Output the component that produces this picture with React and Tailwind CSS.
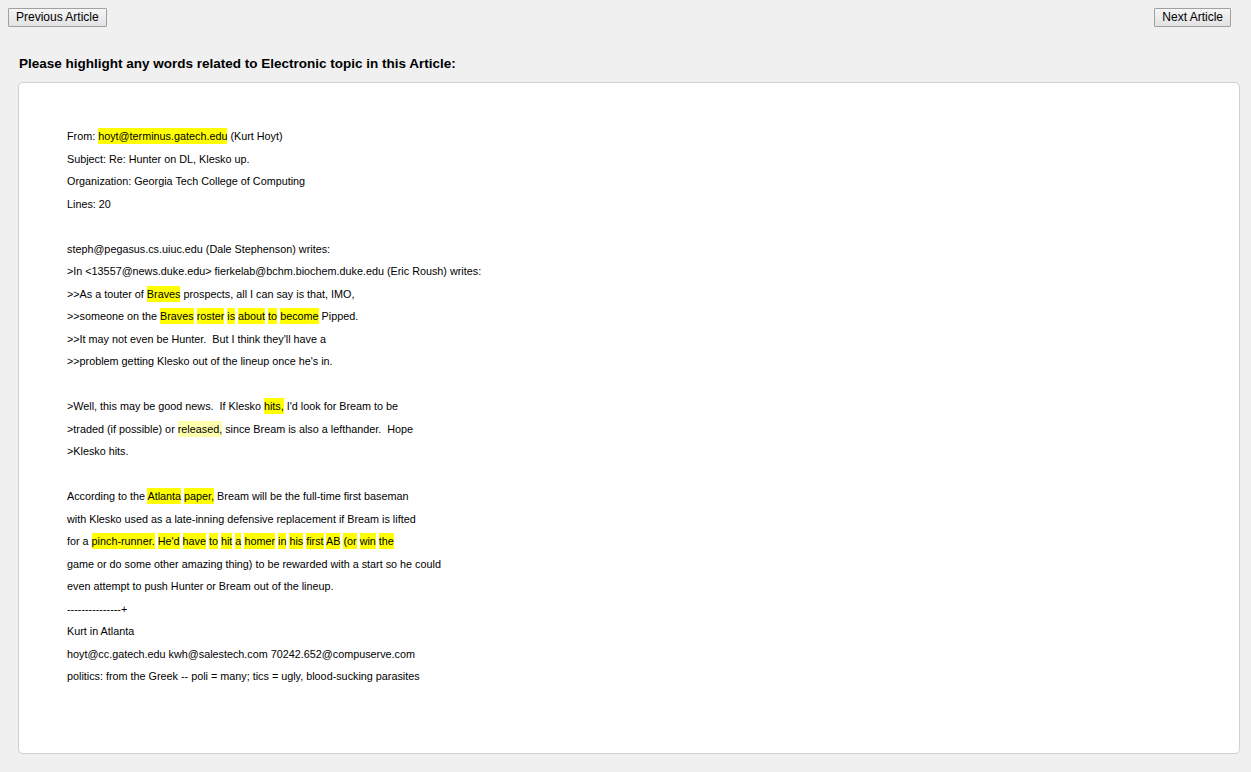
const H = ({ children, light }) => (
  <span className={light ? 'bg-[#ffffb0] py-[2px]' : 'bg-[#ffff00] py-[2px]'}>{children}</span>
);

const Line = ({ children }) => <div className="h-[22.5px] leading-[22.5px] whitespace-pre">{children}</div>;

export default function App() {
  return (
    <div className="min-h-[772px] bg-[#f0f0f0] text-black" style={{ fontFamily: '"Liberation Sans", Arial, sans-serif' }}>
      <div className="flex justify-between px-2 pt-2">
        <button className="h-[19px] px-[7px] text-[12px] leading-[17px] border border-[#a0a0a0] bg-gradient-to-b from-[#f6f6f6] to-[#e2e2e2] rounded-[1px]">
          Previous Article
        </button>
        <button className="h-[19px] px-[7px] text-[12px] leading-[17px] border border-[#a0a0a0] bg-gradient-to-b from-[#f6f6f6] to-[#e2e2e2] rounded-[1px] mr-[12px]">
          Next Article
        </button>
      </div>
      <div className="px-[18px] pt-[28px]">
        <h2 className="text-[13.5px] font-bold leading-[17px] pl-px">Please highlight any words related to Electronic topic in this Article:</h2>
        <div className="mt-[10px] mr-[-7px] h-[672px] bg-white border border-[#d0d0d0] rounded-[5px] pl-[48px] pt-[42px] text-[10.8px]">
          <Line>From: <H>hoyt@terminus.gatech.edu</H> (Kurt Hoyt)</Line>
          <Line>Subject: Re: Hunter on DL, Klesko up.</Line>
          <Line>Organization: Georgia Tech College of Computing</Line>
          <Line>Lines: 20</Line>
          <Line> </Line>
          <Line>steph@pegasus.cs.uiuc.edu (Dale Stephenson) writes:</Line>
          <Line>&gt;In &lt;13557@news.duke.edu&gt; fierkelab@bchm.biochem.duke.edu (Eric Roush) writes:</Line>
          <Line>&gt;&gt;As a touter of <H>Braves</H> prospects, all I can say is that, IMO,</Line>
          <Line>&gt;&gt;someone on the <H>Braves</H> <H>roster</H> <H>is</H> <H>about</H> <H>to</H> <H>become</H> Pipped.</Line>
          <Line>&gt;&gt;It may not even be Hunter.  But I think they'll have a</Line>
          <Line>&gt;&gt;problem getting Klesko out of the lineup once he's in.</Line>
          <Line> </Line>
          <Line>&gt;Well, this may be good news.  If Klesko <H>hits,</H> I'd look for Bream to be</Line>
          <Line>&gt;traded (if possible) or <H light>released,</H> since Bream is also a lefthander.  Hope</Line>
          <Line>&gt;Klesko hits.</Line>
          <Line> </Line>
          <Line>According to the <H>Atlanta</H> <H>paper,</H> Bream will be the full-time first baseman</Line>
          <Line>with Klesko used as a late-inning defensive replacement if Bream is lifted</Line>
          <Line>for a <H>pinch-runner.</H> <H>He'd</H> <H>have</H> <H>to</H> <H>hit</H> <H>a</H> <H>homer</H> <H>in</H> <H>his</H> <H>first</H> <H>AB</H> <H>(or</H> <H>win</H> <H>the</H></Line>
          <Line>game or do some other amazing thing) to be rewarded with a start so he could</Line>
          <Line>even attempt to push Hunter or Bream out of the lineup.</Line>
          <Line>---------------+</Line>
          <Line>Kurt in Atlanta</Line>
          <Line>hoyt@cc.gatech.edu kwh@salestech.com 70242.652@compuserve.com</Line>
          <Line>politics: from the Greek -- poli = many; tics = ugly, blood-sucking parasites</Line>
        </div>
      </div>
    </div>
  );
}
